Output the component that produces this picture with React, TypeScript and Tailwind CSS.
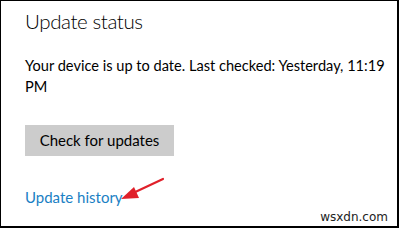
export default function App() {
  return (
    <div className="w-[400px] h-[228px] bg-white">
      <div
        className="relative w-[399px] h-[228px] border-t border-l border-r-2 border-b-2 border-black pl-[24px] text-[#000]"
        style={{ fontFamily: 'Lato, "Noto Sans", sans-serif' }}
      >
        <h1 className="pt-[6px] text-[20.5px] font-light leading-[28px] tracking-[-0.4px]">Update status</h1>
        <p className="mt-[20px] text-[14.6px] leading-[21px]">
          Your device is up to date. Last checked: Yesterday, 11:19 PM
        </p>
        <button className="mt-[28px] h-[31px] w-[149px] bg-[#cccccc] text-[15px] leading-[31px]">
          Check for updates
        </button>
        <div className="mt-[29px]">
          <a className="text-[15px] leading-[20px] text-[#1a80c4]">Update history</a>
        </div>

        {/* red arrow */}
        <svg className="absolute left-0 top-0" width="400" height="228" viewBox="0 0 400 228">
          <line x1="162" y1="178" x2="130" y2="193" stroke="#e0202a" strokeWidth="2.2" strokeLinecap="round" />
          <polygon points="120,198 133,186 138,197" fill="#e0202a" />
        </svg>

        <span
          className="absolute right-[9px] bottom-[2px] text-[12px] leading-[14px] text-[#222]"
          style={{ fontFamily: '"DejaVu Sans", sans-serif' }}
        >
          wsxdn.com
        </span>
      </div>
    </div>
  );
}
